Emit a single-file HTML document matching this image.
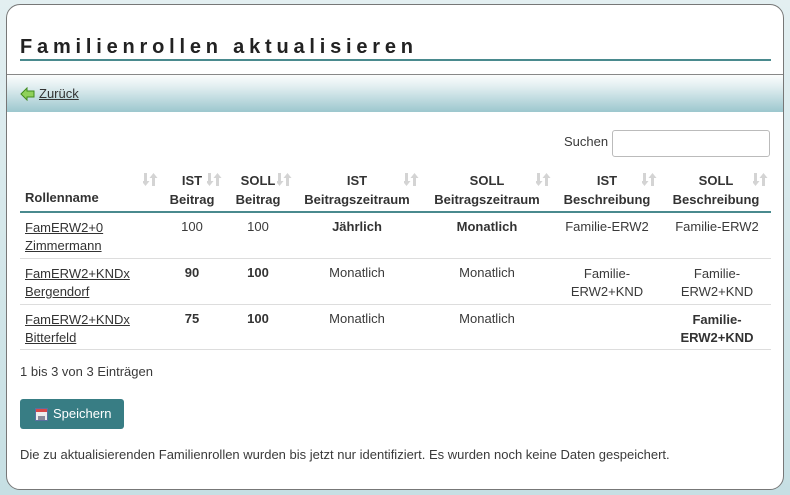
<!DOCTYPE html>
<html><head><meta charset="utf-8"><style>
*{margin:0;padding:0;box-sizing:border-box}
body{width:790px;height:495px;background:linear-gradient(#e3eff1,#c6dfe3);font-family:"Liberation Sans",Arial,sans-serif;font-size:13px;color:#3a3a3a;position:relative;overflow:hidden}
.card{position:absolute;left:6px;top:4px;width:778px;height:486px;background:#fff;border:1px solid #777;border-radius:14px;overflow:hidden}
.t{position:absolute;white-space:nowrap}
.title{left:13px;top:31px;font-size:20px;font-weight:bold;letter-spacing:4.8px;color:#222}
.uline{position:absolute;left:13px;top:54px;width:751px;height:2px;background:#4a8a8e}
.bar{position:absolute;left:0;top:69px;width:778px;height:38px;border-top:1px solid #888;background:linear-gradient(#fbfdfd,#e3eff1 30%,#9cc7ce)}
a{color:#333;text-decoration:underline}
.c{text-align:center}
.b{font-weight:bold;color:#333}
.sort{position:absolute;top:168px}
.hl{position:absolute;left:13px;width:751px;height:1px;background:#ddd}
</style></head><body>
<svg width="0" height="0" style="position:absolute"><defs><g id="s"><path d="M1 0h3v8h2.5l-4 5-4-5h2.5z" fill="#d4d4d4"/><path d="M9 13h3V5h2.5l-4-5-4 5H9z" fill="#d4d4d4"/></g></defs></svg>
<div class="card">
<div class="t title">Familienrollen aktualisieren</div>
<div class="uline"></div>
<div class="bar">
<svg style="position:absolute;left:13px;top:12px" width="15" height="14" viewBox="0 0 15 14"><path d="M1 7 L7 1 L7 4 L14 4 L14 10 L7 10 L7 13 Z" fill="#8fd15a" stroke="#3f8a1e" stroke-width="1"/></svg>
<a class="t" style="left:32px;top:11px">Zurück</a>
</div>
<div class="t" style="left:557px;top:129px">Suchen</div>
<div style="position:absolute;left:605px;top:125px;width:158px;height:27px;border:1px solid #bbb;border-radius:3px"></div>

<div class="t b" style="left:18px;top:185px">Rollenname</div>
<svg class="sort" style="left:136px" width="15" height="14"><use href="#s"/></svg>
<div class="t b c" style="left:155px;top:166px;width:60px;line-height:19px">IST<br>Beitrag</div>
<svg class="sort" style="left:200px" width="15" height="14"><use href="#s"/></svg>
<div class="t b c" style="left:221px;top:166px;width:60px;line-height:19px">SOLL<br>Beitrag</div>
<svg class="sort" style="left:270px" width="15" height="14"><use href="#s"/></svg>
<div class="t b c" style="left:290px;top:166px;width:120px;line-height:19px">IST<br>Beitragszeitraum</div>
<svg class="sort" style="left:397px" width="15" height="14"><use href="#s"/></svg>
<div class="t b c" style="left:420px;top:166px;width:120px;line-height:19px">SOLL<br>Beitragszeitraum</div>
<svg class="sort" style="left:529px" width="15" height="14"><use href="#s"/></svg>
<div class="t b c" style="left:550px;top:166px;width:100px;line-height:19px">IST<br>Beschreibung</div>
<svg class="sort" style="left:635px" width="15" height="14"><use href="#s"/></svg>
<div class="t b c" style="left:659px;top:166px;width:100px;line-height:19px">SOLL<br>Beschreibung</div>
<svg class="sort" style="left:746px" width="15" height="14"><use href="#s"/></svg>
<div class="hl" style="top:206px;height:2px;background:#4a8a8e"></div>

<div class="t" style="left:18px;top:214px;line-height:18px"><a>FamERW2+0</a><br><a>Zimmermann</a></div>
<div class="t c" style="left:155px;top:214px;width:60px">100</div>
<div class="t c" style="left:221px;top:214px;width:60px">100</div>
<div class="t c b" style="left:290px;top:214px;width:120px">Jährlich</div>
<div class="t c b" style="left:420px;top:214px;width:120px">Monatlich</div>
<div class="t c" style="left:545px;top:214px;width:110px">Familie-ERW2</div>
<div class="t c" style="left:655px;top:214px;width:110px">Familie-ERW2</div>
<div class="hl" style="top:253px"></div>

<div class="t" style="left:18px;top:260px;line-height:18px"><a>FamERW2+KNDx</a><br><a>Bergendorf</a></div>
<div class="t c b" style="left:155px;top:260px;width:60px">90</div>
<div class="t c b" style="left:221px;top:260px;width:60px">100</div>
<div class="t c" style="left:290px;top:260px;width:120px">Monatlich</div>
<div class="t c" style="left:420px;top:260px;width:120px">Monatlich</div>
<div class="t c" style="left:545px;top:260px;width:110px;line-height:18px">Familie-<br>ERW2+KND</div>
<div class="t c" style="left:655px;top:260px;width:110px;line-height:18px">Familie-<br>ERW2+KND</div>
<div class="hl" style="top:299px"></div>

<div class="t" style="left:18px;top:306px;line-height:18px"><a>FamERW2+KNDx</a><br><a>Bitterfeld</a></div>
<div class="t c b" style="left:155px;top:306px;width:60px">75</div>
<div class="t c b" style="left:221px;top:306px;width:60px">100</div>
<div class="t c" style="left:290px;top:306px;width:120px">Monatlich</div>
<div class="t c" style="left:420px;top:306px;width:120px">Monatlich</div>
<div class="t c b" style="left:655px;top:306px;width:110px;line-height:18px">Familie-<br>ERW2+KND</div>
<div class="hl" style="top:344px"></div>

<div class="t" style="left:13px;top:359px;font-size:13px">1 bis 3 von 3 Einträgen</div>
<div style="position:absolute;left:13px;top:394px;width:104px;height:30px;background:#387d84;border-radius:3px"></div>
<svg style="position:absolute;left:28px;top:403px" width="13" height="13" viewBox="0 0 13 13"><rect x="0.5" y="0.5" width="12" height="12" fill="#eee" stroke="#5a6fa0"/><rect x="1" y="1" width="11" height="3" fill="#d84848"/><rect x="3" y="8" width="7" height="4" fill="#8a8a9a"/></svg>
<div class="t" style="left:46px;top:401px;color:#fff;font-size:13px">Speichern</div>
<div class="t" style="left:13px;top:442px;font-size:13px">Die zu aktualisierenden Familienrollen wurden bis jetzt nur identifiziert. Es wurden noch keine Daten gespeichert.</div>
</div>
</body></html>
